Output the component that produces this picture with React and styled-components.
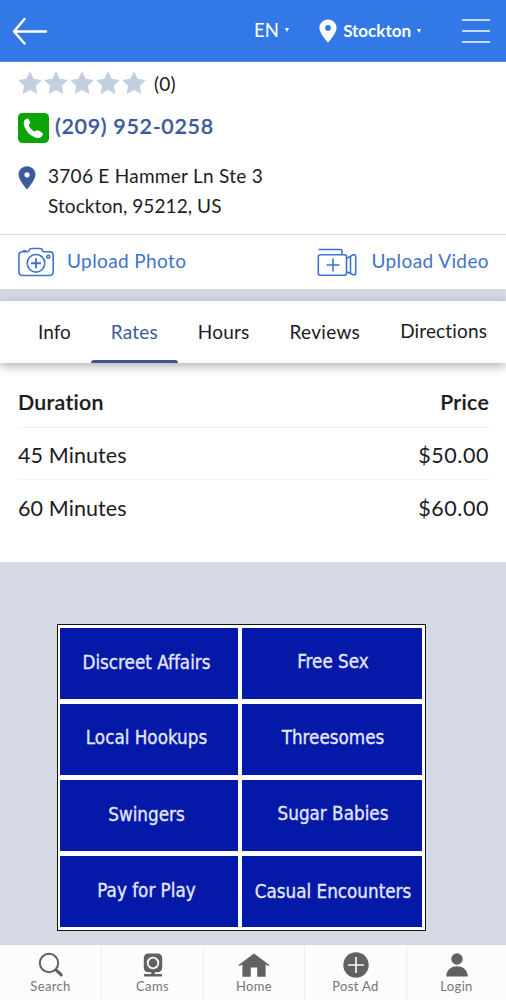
import React, { Component } from 'react';
import styled, { createGlobalStyle } from 'styled-components';

const tabs = [
    { name: 'Info', left: 38, track: 0 },
    { name: 'Rates', left: 40, track: 0.2, active: true },
    { name: 'Hours', left: 40, track: 0.2 },
    { name: 'Reviews', left: 40, track: 0.3 },
    { name: 'Directions', left: 40, track: 0.15, lift: 1 },
];

const rates = [
    { duration: '45 Minutes', price: '$50.00' },
    { duration: '60 Minutes', price: '$60.00' },
];

const links = [
    { name: 'Discreet Affairs', left: true },
    { name: 'Free Sex', lift: 1 },
    { name: 'Local Hookups', left: true, lift: 1 },
    { name: 'Threesomes', lift: 1 },
    { name: 'Swingers', left: true },
    { name: 'Sugar Babies', lift: 1 },
    { name: 'Pay for Play', left: true },
    { name: 'Casual Encounters', lift: -1 },
];

class App extends Component {
    render() {
        return <Page>
            <GlobalStyle />
            <Header>
                <BackButton aria-label="Back">
                    <svg width="36" height="28" viewBox="0 0 36 28" fill="none" stroke="#fff" strokeWidth="2.4" strokeLinecap="round" strokeLinejoin="round">
                        <path d="M12.500 2L2 14.500l10.500 12M2 14.500h32" />
                    </svg>
                </BackButton>
                <Language>EN<Caret /></Language>
                <City>
                    <svg width="18" height="24" viewBox="0 0 18 24">
                        <path fill="#fff" fillRule="evenodd" d="M9 .5C4.2.5.4 4.200.4 8.700.4 14.500 9 23.600 9 23.600s8.600-9.100 8.600-14.900C17.600 4.200 13.800.5 9 .5zm0 5.500a2.900 2.900 0 110 5.800 2.900 2.900 0 010-5.800z" />
                    </svg>
                    <strong>Stockton</strong>
                    <Caret />
                </City>
                <MenuButton aria-label="Menu"><i /><i /><i /></MenuButton>
            </Header>
            <Details>
                <Rating>
                    {[1, 2, 3, 4, 5].map(n => <Star key={n} />)}
                    <span>(0)</span>
                </Rating>
                <Phone>
                    <PhoneIcon />
                    <span>(209) 952-0258</span>
                </Phone>
                <Address>
                    <svg width="18" height="24" viewBox="0 0 18 24">
                        <path fill="#3d5a9c" fillRule="evenodd" d="M9 .3C4.200.3.5 4 .5 8.600.5 14.300 9 23.500 9 23.500s8.500-9.200 8.500-14.900C17.500 4 13.800.3 9 .3zm0 5.900a2.600 2.600 0 110 5.200 2.600 2.600 0 010-5.200z" />
                    </svg>
                    <div>
                        <Line $track={0.28}>3706 E Hammer Ln Ste 3</Line>
                        <Line $track={0.08}>Stockton, 95212, US</Line>
                    </div>
                </Address>
            </Details>
            <Uploads>
                <Upload $gap={13}>
                    <CameraIcon />
                    <span>Upload Photo</span>
                </Upload>
                <Upload $gap={14}>
                    <VideoIcon />
                    <span>Upload Video</span>
                </Upload>
            </Uploads>
            <Tabs>
                {tabs.map(tab => (
                    <Tab key={tab.name} $left={tab.left} $track={tab.track} $lift={tab.lift} $active={tab.active}>
                        {tab.name}
                    </Tab>
                ))}
            </Tabs>
            <Rates>
                <RateHead><span>Duration</span><span>Price</span></RateHead>
                {rates.map(rate => (
                    <RateRow key={rate.duration}>
                        <span>{rate.duration}</span>
                        <Price>{rate.price}</Price>
                    </RateRow>
                ))}
            </Rates>
            <Banner>
                <LinkGrid>
                    {links.map(link => (
                        <LinkCell key={link.name} $lift={link.lift} $left={link.left}>{link.name}</LinkCell>
                    ))}
                </LinkGrid>
            </Banner>
            <BottomNav>
                <NavItem>
                    <svg width="26" height="26" viewBox="0 0 26 26" fill="none" stroke="#616161">
                        <circle cx="11" cy="11" r="9.200" strokeWidth="2" />
                        <path d="M18.200 18.200l5 4.700" strokeWidth="3.200" strokeLinecap="round" />
                    </svg>
                    <span>Search</span>
                </NavItem>
                <NavItem>
                    <svg width="26" height="26" viewBox="0 0 26 26" fill="#616161">
                        <rect x="3.800" y="1.500" width="18.400" height="18.800" rx="4.500" />
                        <circle cx="13" cy="11" r="5.300" fill="none" stroke="#fcfcfc" strokeWidth="1.800" />
                        <path d="M11.300 20h3.400v2h6.500q1 0 1 1.200t-1 1.200H4.800q-1 0-1-1.200t1-1.200h6.500z" />
                    </svg>
                    <span>Cams</span>
                </NavItem>
                <NavItem>
                    <svg width="32" height="26" viewBox="0 0 32 26" fill="#616161">
                        <path d="M16 1.500L.6 13l.8 1.100 3-1.600v12.200h8.400v-9.200h6.400v9.200h8.400V12.500l3 1.600.8-1.100z" />
                    </svg>
                    <span>Home</span>
                </NavItem>
                <NavItem>
                    <svg width="26" height="26" viewBox="0 0 26 26">
                        <circle cx="13" cy="13" r="12.700" fill="#616161" />
                        <path d="M13 5v16M5 13h16" stroke="#fcfcfc" strokeWidth="1.600" />
                    </svg>
                    <span>Post Ad</span>
                </NavItem>
                <NavItem>
                    <svg width="26" height="26" viewBox="0 0 26 26" fill="#616161">
                        <circle cx="13" cy="7" r="5.700" />
                        <path d="M2.200 24.500c0-6 4.300-10.300 10.800-10.300s10.800 4.300 10.800 10.300z" />
                    </svg>
                    <span>Login</span>
                </NavItem>
            </BottomNav>
        </Page>
    }
}

const Star = () => (
    <svg width="24" height="24" viewBox="0 0 24 24">
        <path fill="#c2cfde" d="M12 .2l3.700 7.500 8.100 1.300-5.900 5.700 1.400 8.300L12 19l-7.300 4 1.400-8.300L.2 9l8.100-1.300z" />
    </svg>
);

const PhoneIcon = () => (
    <svg width="31" height="30" viewBox="0 0 31 30">
        <rect width="31" height="30" rx="4.500" fill="#0aa406" />
        <path fill="#fff" d="M6.200 7.800c1-1.500 2.600-2.500 3.700-2.200.8.300 2.300 3 2.400 4 .1.900-1.400 1.800-1.500 2.700.2 1.600 3.600 5.400 5.600 6.200 1 .3 2-1.300 3.100-1.200 1.100.1 4.600 2.300 5.300 3.200.8 1-1.300 3.600-3 4.200-3.200 1-8.200-1.300-11.500-4.800C7 16.300 4.700 10.600 6.200 7.800z" />
    </svg>
);

const CameraIcon = () => (
    <svg width="36" height="30" viewBox="0 0 36 30" fill="none" stroke="#3f73cf" strokeWidth="1.600" strokeLinejoin="round">
        <path d="M4.500 4.700H9.500q1.500 0 1.800-1.500t2-1.700h9q1.700 0 2 1.700t1.700 1.500h5.500q3.700 0 3.700 3.600V24.500q0 4-3.700 4h-27Q.9 28.500.9 24.500V8.300q0-3.600 3.600-3.600zM4.800 3.900h3.500" />
        <circle cx="18" cy="16.300" r="8.800" />
        <path d="M18 11.300v10M13 16.300h10" strokeWidth="1.900" />
        <circle cx="30.300" cy="9.800" r="1.500" />
    </svg>
);

const VideoIcon = () => (
    <svg width="40" height="29" viewBox="0 0 40 29" fill="none" stroke="#3f73cf" strokeWidth="1.600" strokeLinejoin="round">
        <path d="M1.500 1.500h22q1.400 0 1.400 1.400V6.500M3.500 6.800h24q2 0 2 2v16.500q0 2-2 2h-24q-2.200 0-2.200-2V8.800q0-2 2.200-2z" />
        <path d="M29.500 10.500l6.700-3.700q2.500-.6 2.500 1.500v17q0 2-2.500 1.500l-6.700-3M33.500 8.500v16.500" />
        <path d="M16 10.500v13M9.500 17h13" />
    </svg>
);

const GlobalStyle = createGlobalStyle`
body{
    margin: 0;
    background: #d4d9e3;
    color: #1c1c1e;
    font-family: Lato, "Open Sans", sans-serif;
    font-variant-ligatures: none;
}
svg{
    display: block;
    flex: none;
}
`

const Page = styled.div`
display: flex;
flex-direction: column;
width: 506px;
height: 1000px;
overflow: hidden;
`

const Header = styled.header`
display: flex;
align-items: center;
box-sizing: border-box;
height: 62px;
flex: none;
padding: 0 16px 0 12px;
background: #3378e7;
border-bottom: 1px solid #5e8dd8;
color: #fff;
`

const BackButton = styled.button`
padding: 0;
border: 0;
background: none;
margin-right: auto;
`

const Caret = styled.i`
border: 2.5px solid transparent;
border-top: 4px solid #fff;
border-bottom: 0;
`

const Language = styled.div`
display: flex;
align-items: center;
gap: 6px;
padding-bottom: 1px;
font-size: 18.500px;
letter-spacing: .2px;
margin-right: 30px;
`

const City = styled.div`
display: flex;
align-items: center;
gap: 6px;
margin-right: 41px;
strong{
    font-size: 17px;
    font-weight: 700;
    padding-bottom: 1px;
}
`

const MenuButton = styled.button`
display: flex;
flex-direction: column;
gap: 9px;
width: 28px;
padding: 0;
border: 0;
background: none;
i{
    height: 2px;
    background: #c3dcf7;
}
`

const Details = styled.section`
box-sizing: border-box;
height: 172px;
flex: none;
padding: 9px 18px 0;
background: #fff;
`

const Rating = styled.div`
display: flex;
align-items: center;
height: 24px;
gap: 2px;
span{
    margin-left: 6px;
    font-size: 19px;
    letter-spacing: .2px;
}
`

const Phone = styled.div`
display: flex;
align-items: center;
gap: 6px;
height: 30px;
margin-top: 18px;
color: #3d5a9c;
span{
    font-size: 21.500px;
    font-weight: 600;
    letter-spacing: .65px;
    padding-bottom: 4px;
    -webkit-text-stroke: .2px #3d5a9c;
}
`

const Address = styled.div`
display: flex;
gap: 12px;
margin-top: 18px;
svg{
    margin-top: 5px;
}
`

const Line = styled.div`
font-size: 19px;
line-height: 29.500px;
letter-spacing: ${props => props.$track}px;
white-space: nowrap;
`

const Uploads = styled.section`
display: flex;
justify-content: space-between;
align-items: center;
box-sizing: border-box;
height: 55px;
flex: none;
padding: 0 17px 0 18px;
background: #fff;
border-top: 1px solid #dcdde0;
`

const Upload = styled.div`
display: flex;
align-items: center;
gap: ${props => props.$gap}px;
color: #3f73cf;
font-size: 19px;
letter-spacing: .4px;
span{
    padding-bottom: 3px;
}
`

const Tabs = styled.nav`
display: flex;
height: 62px;
flex: none;
margin-top: 12px;
background: #fff;
box-shadow: 0 3px 10px rgba(0, 0, 0, .32);
z-index: 1;
`

const Tab = styled.div`
position: relative;
margin-left: ${props => props.$left}px;
font-size: 19px;
line-height: ${props => 61 - (props.$lift || 0) * 2}px;
letter-spacing: ${props => props.$track}px;
color: ${props => props.$active ? '#3d5a9c' : 'inherit'};
&::after{
    content: ${props => props.$active ? '""' : 'none'};
    position: absolute;
    left: -20px;
    right: -20px;
    bottom: 0;
    height: 3px;
    border-radius: 3px 3px 0 0;
    background: #435391;
}
`

const Rates = styled.section`
box-sizing: border-box;
height: 199px;
flex: none;
padding: 14px 17px 0 18px;
background: #fff;
`

const RateRow = styled.div`
display: flex;
justify-content: space-between;
box-sizing: border-box;
height: 52px;
font-size: 21.500px;
letter-spacing: .1px;
line-height: 55px;
border-bottom: 1px solid #f0f0f2;
&:last-child{
    border-bottom: 0;
    line-height: 56px;
}
`

const RateHead = styled(RateRow)`
height: 51px;
font-size: 21.300px;
font-weight: 600;
letter-spacing: .3px;
line-height: 50px;
-webkit-text-stroke: .2px #1c1c1e;
`

const Price = styled.span`
letter-spacing: .55px;
`

const Banner = styled.section`
flex: 1;
padding: 62px 0 0 57px;
background: #d4d9e3;
`

const LinkGrid = styled.div`
display: grid;
grid-template-columns: 178px 180px;
grid-auto-rows: 71px;
gap: 5px 4px;
box-sizing: border-box;
width: 369px;
height: 307px;
padding: 3px 2px;
border: 1px solid #111;
background: #fff;
`

const LinkCell = styled.div`
display: flex;
align-items: center;
justify-content: center;
padding: 0 ${props => props.$left ? 5 : 0}px ${props => 3 + (props.$lift || 0) * 2}px ${props => props.$left ? 0 : 2}px;
background: #0419a8;
color: #e4e7ff;
font-family: "DejaVu Sans Condensed", "DejaVu Sans", sans-serif;
font-stretch: condensed;
font-size: 18.700px;
-webkit-text-stroke: .3px #e4e7ff;
box-sizing: border-box;
`

const BottomNav = styled.nav`
display: grid;
grid-template-columns: 102px 102px 101px 102px 99px;
height: 55px;
flex: none;
background: #fcfcfc;
`

const NavItem = styled.div`
display: flex;
flex-direction: column;
align-items: center;
padding-top: 7px;
color: #757575;
font-size: 13px;
letter-spacing: .35px;
line-height: 17px;
border-right: 1px solid #ededed;
&:last-child{
    border-right: 0;
}
`

export default App;
